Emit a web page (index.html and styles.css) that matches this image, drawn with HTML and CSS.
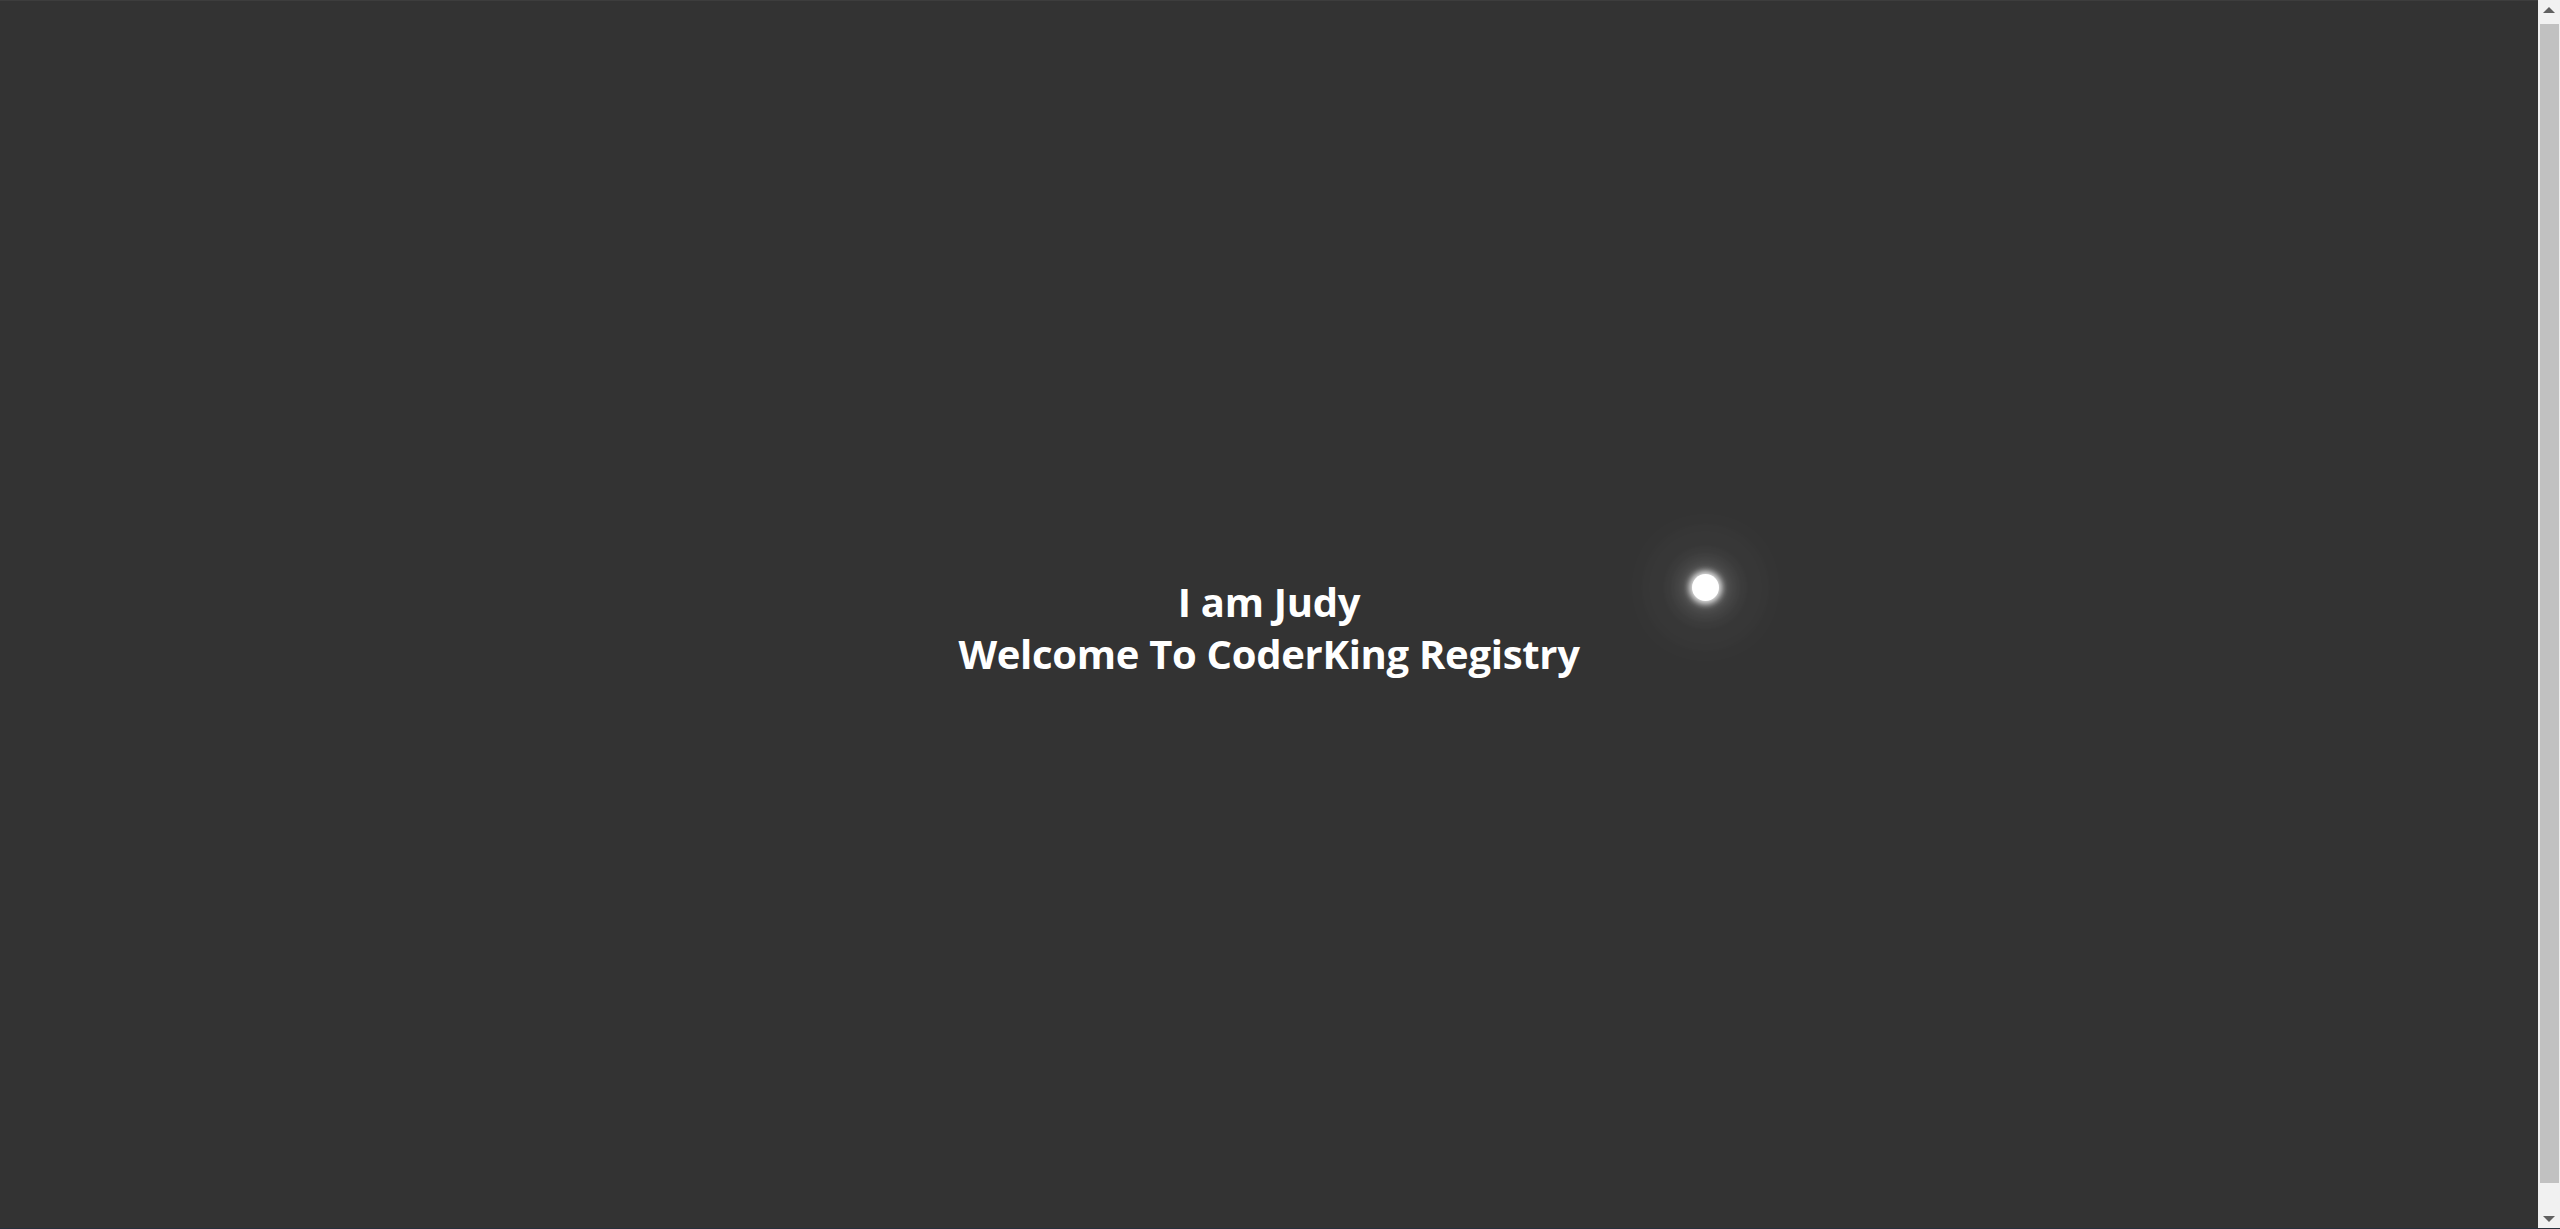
FILE: index.html
```html
<!DOCTYPE html>
<html lang="en">
<head>
<meta charset="utf-8">
<title>CoderKing Registry</title>
<link rel="stylesheet" href="styles.css">
</head>
<body>
<main class="hero">
  <h1 class="intro">
    <span class="intro-line">I am Judy</span>
    <span class="intro-line">Welcome To CoderKing Registry</span>
  </h1>
  <div class="orb"></div>
</main>
<aside class="scrollbar" aria-hidden="true">
  <div class="scroll-btn"><span class="arrow arrow-up"></span></div>
  <div class="scroll-track"><div class="scroll-thumb"></div></div>
  <div class="scroll-btn"><span class="arrow arrow-down"></span></div>
</aside>
<div class="screen-edge"></div>
</body>
</html>
```

FILE: styles.css
```css
html {
  background: #333333;
}
body {
  margin: 0;
  padding-right: 22px;
  background: #333333;
  border-top: 1px solid #3d3d3d;
  font-family: "Open Sans", Lato, sans-serif;
  color: #ffffff;
  overflow: hidden;
}
.hero {
  position: relative;
  box-sizing: border-box;
  min-height: calc(100vh - 1px);
  padding-top: 25px;
  display: flex;
  align-items: center;
  justify-content: center;
}
.intro {
  margin: 0;
  font-size: 40px;
  font-weight: 700;
  line-height: 52px;
  letter-spacing: -0.3px;
  text-align: center;
}
.intro-line {
  display: block;
}
.orb {
  position: absolute;
  left: 1692px;
  top: 573px;
  width: 27px;
  height: 27px;
  border-radius: 50%;
  background: #ffffff;
  box-shadow:
    0 0 6px 3px rgba(255, 255, 255, 0.85),
    0 0 24px 10px rgba(255, 255, 255, 0.22),
    0 0 70px 28px rgba(255, 255, 255, 0.07),
    0 0 120px 50px rgba(255, 255, 255, 0.025);
}
.scrollbar {
  position: fixed;
  top: 0;
  right: 0;
  bottom: 0;
  width: 22px;
  background: #f1f1f1;
  display: flex;
  flex-direction: column;
}
.scroll-btn {
  height: 22px;
  flex: none;
  display: flex;
  align-items: center;
  justify-content: center;
}
.arrow {
  width: 0;
  height: 0;
  border-left: 6px solid transparent;
  border-right: 6px solid transparent;
}
.arrow-up {
  border-bottom: 6px solid #606060;
  margin-top: -2px;
}
.arrow-down {
  border-top: 6px solid #606060;
  margin-top: 2px;
}
.scroll-track {
  flex: 1;
  padding: 2px 1px 0 2px;
}
.scroll-thumb {
  height: calc(100% - 24px);
  background: #c1c1c1;
}
.screen-edge {
  position: fixed;
  left: 0;
  right: 0;
  bottom: 0;
  height: 1px;
  background: #27303a;
}
```
